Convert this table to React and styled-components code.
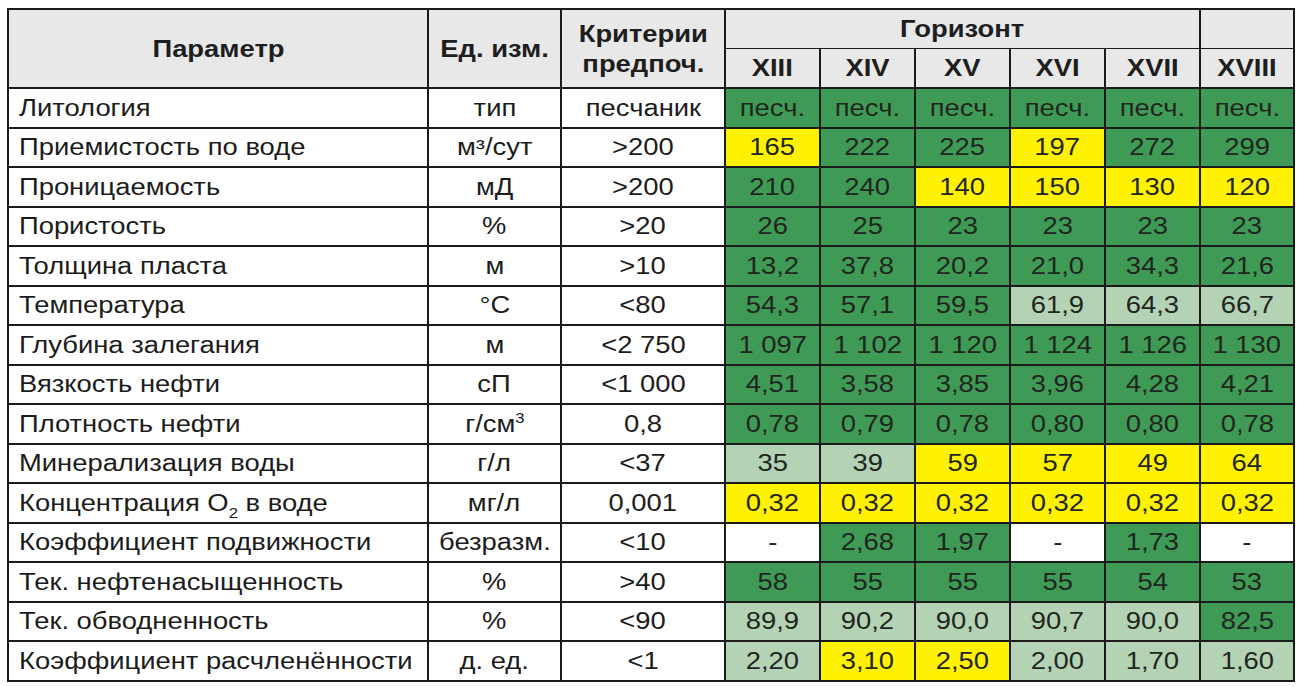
import React from 'react';
import styled, { createGlobalStyle } from 'styled-components';

const GlobalStyle = createGlobalStyle`
  body {
    margin: 0;
    background: #fff;
    font-family: "Liberation Sans", Arial, sans-serif;
    color: #1c1c1c;
  }
`;

const Page = styled.div`
  padding: 8px 0 0 7px;
`;

const Table = styled.table`
  border-collapse: collapse;
  table-layout: fixed;
  width: 1286px;
  font-size: 23px;
`;

const Col = styled.col`
  width: ${(p) => p.$w}px;
`;

// the source lettering is wider than Arial at the same height
const Text = styled.span`
  display: inline-block;
  white-space: nowrap;
  transform: scaleX(1.19);
  transform-origin: ${(p) => (p.$left ? 'left center' : 'center')};
`;

const HeadCell = styled.th`
  background: #e8e8e8;
  border: 2px solid #1a1a1a;
  font-weight: bold;
  font-size: 23px;
  line-height: 30px;
  color: #1e1e1e;
  text-align: center;
  vertical-align: middle;
  padding: 0;
  height: 38px;
  ${(p) => p.$top && 'border-bottom-width: 1px;'}
  ${(p) => p.$sub && 'border-top-width: 1px;'}
`;

const NameCell = styled.td`
  border: 2px solid #1a1a1a;
  padding: 0 0 0 10px;
  text-align: left;
  white-space: nowrap;
  height: 37.5px;
  line-height: 26px;
`;

const TextCell = styled.td`
  border: 2px solid #1a1a1a;
  padding: 0;
  text-align: center;
  white-space: nowrap;
  line-height: 26px;
`;

const fills = {
  g: '#3f9a55',
  l: '#b4d2b4',
  y: '#fff200',
  w: '#ffffff',
};

const ValueCell = styled.td`
  border: 2px solid #1a1a1a;
  padding: 0;
  text-align: center;
  white-space: nowrap;
  line-height: 26px;
  color: #1f261f;
  background: ${(p) => fills[p.$fill]};
`;

const Sup = styled.sup`
  font-size: 14px;
  vertical-align: 9px;
  line-height: 0;
`;

const Sub = styled.sub`
  font-size: 14px;
  vertical-align: -7px;
  line-height: 0;
`;

const widths = [420, 133, 164, 95, 95, 95, 95, 95, 94];

const horizons = ['XIII', 'XIV', 'XV', 'XVI', 'XVII', 'XVIII'];

const rows = [
  ['Литология', 'тип', 'песчаник', [['песч.', 'g'], ['песч.', 'g'], ['песч.', 'g'], ['песч.', 'g'], ['песч.', 'g'], ['песч.', 'g']]],
  ['Приемистость по воде', 'м³/сут', '>200', [['165', 'y'], ['222', 'g'], ['225', 'g'], ['197', 'y'], ['272', 'g'], ['299', 'g']]],
  ['Проницаемость', 'мД', '>200', [['210', 'g'], ['240', 'g'], ['140', 'y'], ['150', 'y'], ['130', 'y'], ['120', 'y']]],
  ['Пористость', '%', '>20', [['26', 'g'], ['25', 'g'], ['23', 'g'], ['23', 'g'], ['23', 'g'], ['23', 'g']]],
  ['Толщина пласта', 'м', '>10', [['13,2', 'g'], ['37,8', 'g'], ['20,2', 'g'], ['21,0', 'g'], ['34,3', 'g'], ['21,6', 'g']]],
  ['Температура', '°C', '<80', [['54,3', 'g'], ['57,1', 'g'], ['59,5', 'g'], ['61,9', 'l'], ['64,3', 'l'], ['66,7', 'l']]],
  ['Глубина залегания', 'м', '<2 750', [['1 097', 'g'], ['1 102', 'g'], ['1 120', 'g'], ['1 124', 'g'], ['1 126', 'g'], ['1 130', 'g']]],
  ['Вязкость нефти', 'сП', '<1 000', [['4,51', 'g'], ['3,58', 'g'], ['3,85', 'g'], ['3,96', 'g'], ['4,28', 'g'], ['4,21', 'g']]],
  ['Плотность нефти', <>г/см<Sup>3</Sup></>, '0,8', [['0,78', 'g'], ['0,79', 'g'], ['0,78', 'g'], ['0,80', 'g'], ['0,80', 'g'], ['0,78', 'g']]],
  ['Минерализация воды', 'г/л', '<37', [['35', 'l'], ['39', 'l'], ['59', 'y'], ['57', 'y'], ['49', 'y'], ['64', 'y']]],
  [<>Концентрация O<Sub>2</Sub> в воде</>, 'мг/л', '0,001', [['0,32', 'y'], ['0,32', 'y'], ['0,32', 'y'], ['0,32', 'y'], ['0,32', 'y'], ['0,32', 'y']]],
  ['Коэффициент подвижности', 'безразм.', '<10', [['-', 'w'], ['2,68', 'g'], ['1,97', 'g'], ['-', 'w'], ['1,73', 'g'], ['-', 'w']]],
  ['Тек. нефтенасыщенность', '%', '>40', [['58', 'g'], ['55', 'g'], ['55', 'g'], ['55', 'g'], ['54', 'g'], ['53', 'g']]],
  ['Тек. обводненность', '%', '<90', [['89,9', 'l'], ['90,2', 'l'], ['90,0', 'l'], ['90,7', 'l'], ['90,0', 'l'], ['82,5', 'g']]],
  ['Коэффициент расчленённости', 'д. ед.', '<1', [['2,20', 'l'], ['3,10', 'y'], ['2,50', 'y'], ['2,00', 'l'], ['1,70', 'l'], ['1,60', 'l']]],
];

const App = () => {
  return (
    <Page>
      <GlobalStyle />
      <Table>
        <colgroup>
          {widths.map((w, i) => (
            <Col key={i} $w={w} />
          ))}
        </colgroup>
        <thead>
          <tr>
            <HeadCell rowSpan={2}><Text>Параметр</Text></HeadCell>
            <HeadCell rowSpan={2}><Text>Ед. изм.</Text></HeadCell>
            <HeadCell rowSpan={2}><Text>Критерии<br />предпоч.</Text></HeadCell>
            <HeadCell colSpan={5} $top><Text>Горизонт</Text></HeadCell>
            <HeadCell $top />
          </tr>
          <tr>
            {horizons.map((h) => (
              <HeadCell key={h} $sub><Text>{h}</Text></HeadCell>
            ))}
          </tr>
        </thead>
        <tbody>
          {rows.map(([name, unit, crit, values], i) => (
            <tr key={i}>
              <NameCell><Text $left>{name}</Text></NameCell>
              <TextCell><Text>{unit}</Text></TextCell>
              <TextCell><Text>{crit}</Text></TextCell>
              {values.map(([v, f], j) => (
                <ValueCell key={j} $fill={f}><Text>{v}</Text></ValueCell>
              ))}
            </tr>
          ))}
        </tbody>
      </Table>
    </Page>
  );
};

export default App;
